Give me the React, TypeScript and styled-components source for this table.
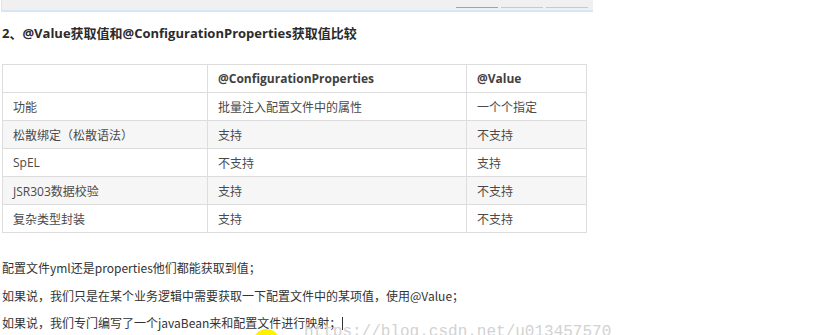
import React from "react";
import styled, { createGlobalStyle } from "styled-components";

const GlobalStyle = createGlobalStyle`
  body {
    margin: 0;
    background: #fff;
    font-family: "Open Sans", "Noto Sans CJK SC", sans-serif;
  }
`;

const Page = styled.div`
  position: relative;
  width: 825px;
  height: 335px;
  overflow: hidden;
  padding-left: 2px;
  box-sizing: border-box;
`;

const TabStrip = styled.div`
  width: 586px;
  height: 10px;
  background: #f0f0f0;
  border-bottom: 2px solid #d6e6f5;
  border-left: 1px solid #e2e2e2;
  box-sizing: content-box;
  display: flex;
  justify-content: flex-end;
  gap: 3px;
  padding-right: 5px;
  margin-left: -1px;
`;

const Tab = styled.div<{ $active?: boolean }>`
  width: 42px;
  height: 7px;
  border-bottom: 1px solid ${(p) => (p.$active ? "#74aee4" : "#c9c9c9")};
`;

const Heading = styled.h2`
  margin: 11px 0 0;
  font-size: 13px;
  line-height: 20px;
  font-weight: 700;
  color: #2b2b2b;
`;

const Table = styled.table`
  margin-top: 21px;
  width: 584px;
  border-collapse: collapse;
  table-layout: fixed;
  font-size: 12px;
  color: #4a4a4a;
`;

const Row = styled.tr<{ $shade?: boolean }>`
  height: 28px;
  background: ${(p) => (p.$shade ? "#f6f6f6" : "#fff")};
`;

const Cell = styled.td`
  border: 1px solid #dddddd;
  padding: 0 10px;
  vertical-align: middle;
`;

const HeadCell = styled(Cell).attrs({ as: "th" })`
  text-align: left;
  font-weight: 700;
  color: #404040;
`;

const Notes = styled.div`
  margin-top: 21px;
  font-family: "Noto Sans CJK SC", sans-serif;
  font-size: 12px;
  line-height: 27.5px;
  color: #333;
`;

const Line = styled.p`
  margin: 0;
`;

const Caret = styled.span`
  display: inline-block;
  width: 1px;
  height: 13px;
  margin-left: 1px;
  vertical-align: -2px;
  background: #333;
`;

// blog url stamped over the lower edge of the image
const Watermark = styled.div`
  position: absolute;
  left: 304px;
  top: 323px;
  font-family: "Liberation Mono", monospace;
  font-size: 16px;
  line-height: 18px;
  color: #d2d2d2;
  white-space: nowrap;
`;

const Pointer = styled.div`
  position: absolute;
  left: 253px;
  top: 329px;
  width: 27px;
  height: 27px;
  border-radius: 50%;
  background: #fff200;
`;

const rows = [
  { name: "功能", config: "批量注入配置文件中的属性", value: "一个个指定" },
  { name: "松散绑定（松散语法）", config: "支持", value: "不支持" },
  { name: "SpEL", config: "不支持", value: "支持" },
  { name: "JSR303数据校验", config: "支持", value: "不支持" },
  { name: "复杂类型封装", config: "支持", value: "不支持" },
];

export default function App() {
  return (
    <Page>
      <GlobalStyle />
      <TabStrip>
        <Tab $active />
        <Tab />
        <Tab />
      </TabStrip>
      <Heading>2、@Value获取值和@ConfigurationProperties获取值比较</Heading>
      <Table>
        <colgroup>
          <col style={{ width: 205 }} />
          <col style={{ width: 259 }} />
          <col style={{ width: 120 }} />
        </colgroup>
        <thead>
          <Row>
            <HeadCell />
            <HeadCell>@ConfigurationProperties</HeadCell>
            <HeadCell>@Value</HeadCell>
          </Row>
        </thead>
        <tbody>
          {rows.map((r, i) => (
            <Row key={r.name} $shade={i % 2 === 1}>
              <Cell>{r.name}</Cell>
              <Cell>{r.config}</Cell>
              <Cell>{r.value}</Cell>
            </Row>
          ))}
        </tbody>
      </Table>
      <Notes>
        <Line>配置文件yml还是properties他们都能获取到值；</Line>
        <Line>如果说，我们只是在某个业务逻辑中需要获取一下配置文件中的某项值，使用@Value；</Line>
        <Line>
          如果说，我们专门编写了一个javaBean来和配置文件进行映射；
          <Caret />
        </Line>
      </Notes>
      <Pointer />
      <Watermark>https://blog.csdn.net/u013457570</Watermark>
    </Page>
  );
}
